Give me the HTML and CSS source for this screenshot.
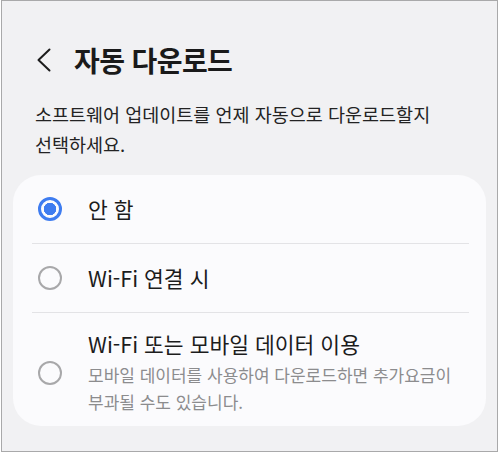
FILE: index.html
```html
<!DOCTYPE html>
<html lang="ko">
<head>
<meta charset="utf-8">
<title>자동 다운로드</title>
<link rel="stylesheet" href="styles.css">
</head>
<body>
<div class="frame">
  <header class="header">
    <button class="back" aria-label="뒤로">
      <svg width="16" height="24" viewBox="0 0 16 24" aria-hidden="true">
        <path d="M13.5 1.5 L2.5 12 L13.5 22.5" fill="none" stroke="#1c1c1c" stroke-width="2" stroke-linecap="round" stroke-linejoin="round"/>
      </svg>
    </button>
    <h1 class="title">자동 다운로드</h1>
  </header>

  <p class="desc">소프트웨어 업데이트를 언제 자동으로 다운로드할지<br>선택하세요.</p>

  <div class="card">
    <label class="option">
      <span class="radio radio-on"></span>
      <span class="option-text">
        <span class="option-title">안 함</span>
      </span>
    </label>
    <div class="divider"></div>
    <label class="option">
      <span class="radio"></span>
      <span class="option-text">
        <span class="option-title">Wi-Fi 연결 시</span>
      </span>
    </label>
    <div class="divider"></div>
    <label class="option option-tall">
      <span class="radio"></span>
      <span class="option-text">
        <span class="option-title">Wi-Fi 또는 모바일 데이터 이용</span>
        <span class="option-sub">모바일 데이터를 사용하여 다운로드하면 추가요금이<br>부과될 수도 있습니다.</span>
      </span>
    </label>
  </div>
</div>
</body>
</html>
```

FILE: styles.css
```css
* {
  box-sizing: border-box;
}

html, body {
  margin: 0;
  padding: 0;
  background: #ffffff;
}

body {
  font-family: "Noto Sans CJK KR", "Noto Sans", sans-serif;
  color: #1c1c1c;
}

.frame {
  margin-left: 1px;
  width: 497px;
  height: 452px;
  border: 1px solid #a9a9aa;
  background: #f1f1f3;
  overflow: hidden;
}

/* top bar */
.header {
  display: flex;
  align-items: center;
  height: 38px;
  margin-top: 40px;
  padding-left: 34px;
}

.back {
  display: flex;
  align-items: center;
  justify-content: center;
  width: 16px;
  height: 24px;
  padding: 0;
  border: 0;
  background: none;
}

.title {
  margin: 0 0 0 22px;
  font-size: 28px;
  line-height: 38px;
  font-weight: 700;
  letter-spacing: -0.6px;
  color: #1a1a1a;
}

.desc {
  margin: 20px 0 0;
  padding-left: 33px;
  font-size: 18.5px;
  line-height: 30px;
  color: #232323;
}

/* option list */
.card {
  margin: 16px 11px 0;
  background: #fbfbfd;
  border-radius: 28px;
  overflow: hidden;
}

.option {
  display: flex;
  align-items: center;
  min-height: 68px;
  padding-left: 25px;
}

.option-tall {
  min-height: 113px;
  padding-top: 17px;
  padding-bottom: 11px;
}

.radio {
  flex: none;
  width: 24px;
  height: 24px;
  border-radius: 50%;
  border: 2px solid #a8a8aa;
  margin-right: 26px;
}

.radio-on {
  border: 3px solid #3e7cf0;
  background: radial-gradient(circle, #3e7cf0 0 6px, transparent 6.5px);
}

.option-text {
  display: flex;
  flex-direction: column;
}

.option-title {
  font-size: 21.5px;
  line-height: 28px;
  color: #1c1c1c;
}

.option-sub {
  margin-top: 3px;
  font-size: 17px;
  line-height: 27px;
  color: #8c8c8e;
}

.divider {
  height: 1px;
  margin: 0 17px 0 19px;
  background: #e3e3e6;
}
```
